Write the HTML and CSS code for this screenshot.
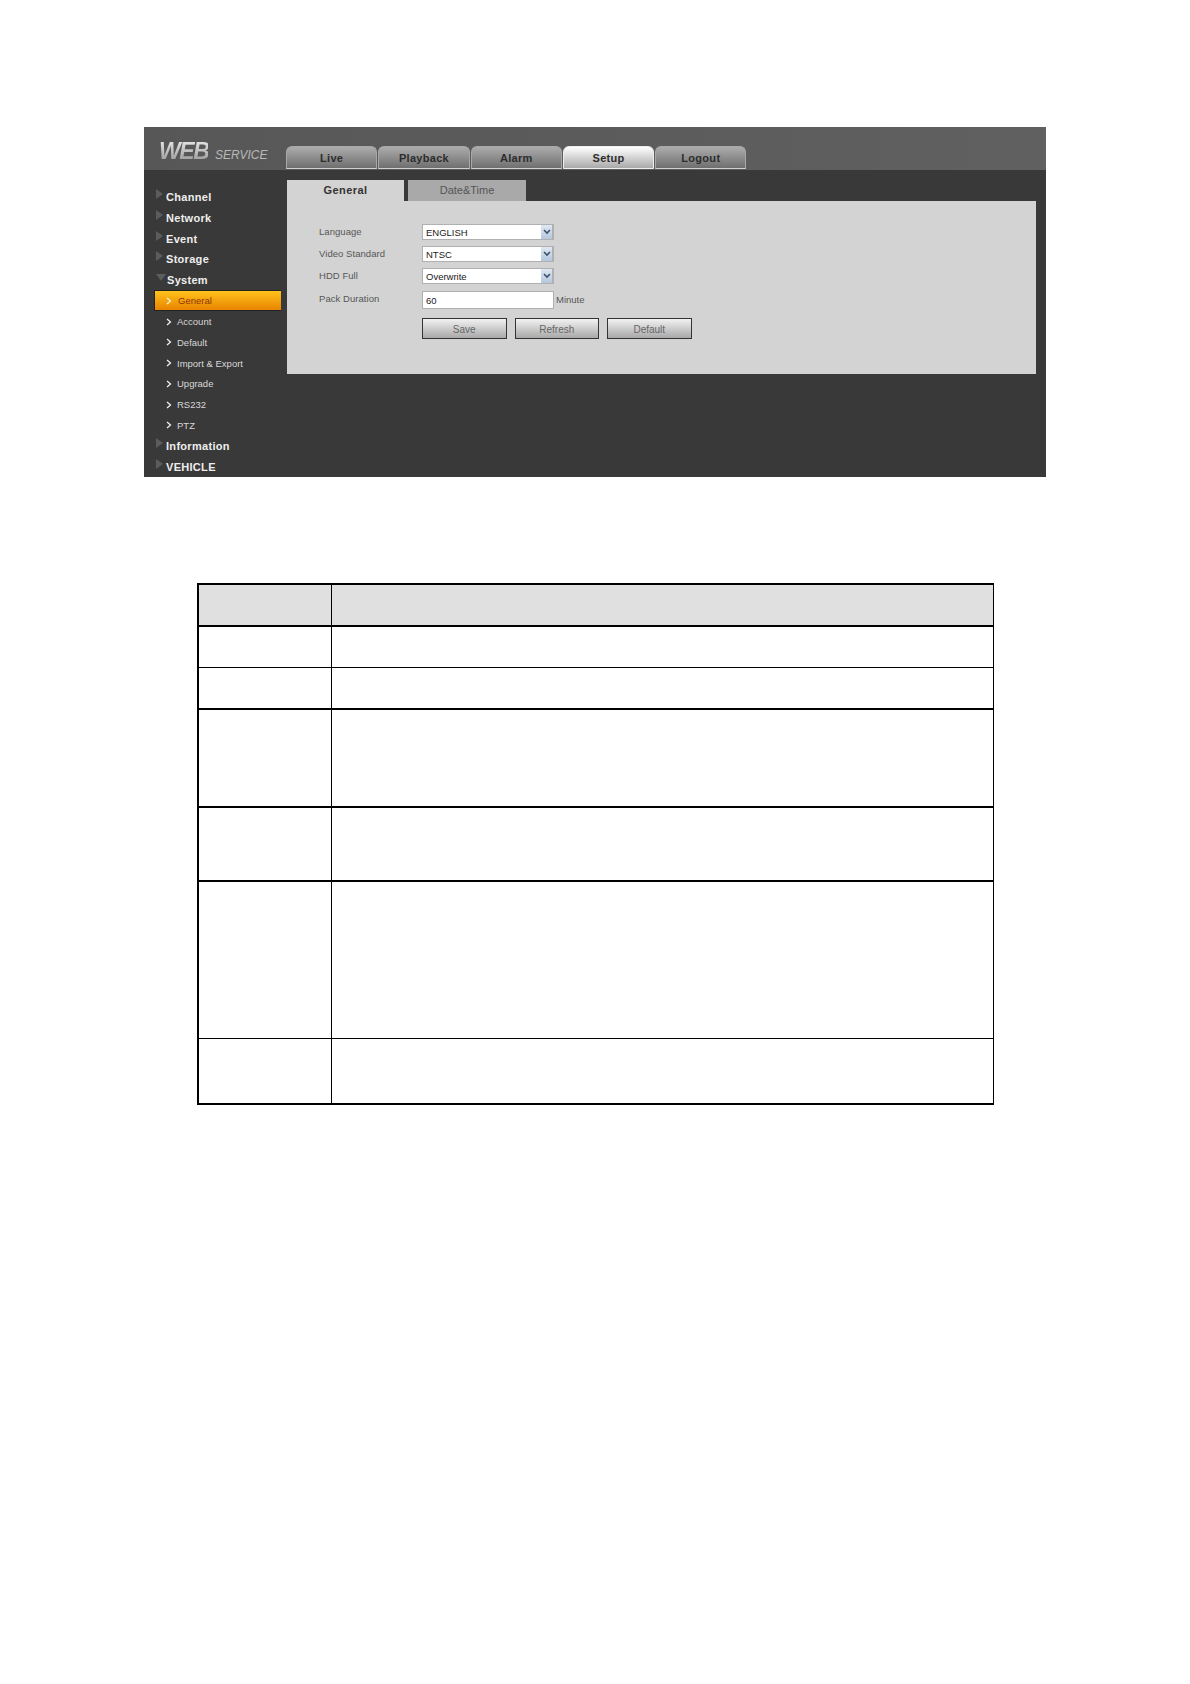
FILE: index.html
```html
<!DOCTYPE html>
<html lang="en">
<head>
    <meta charset="UTF-8">
    <title>WEB SERVICE - General</title>
    <link rel="stylesheet" href="styles.css">
</head>
<body>
    <div class="panel">
        <div class="header">
            <div class="logo"><span class="logo-web">WEB</span><span class="logo-service">SERVICE</span></div>
            <div class="nav-tabs">
                <a class="nav-tab">Live</a>
                <a class="nav-tab">Playback</a>
                <a class="nav-tab">Alarm</a>
                <a class="nav-tab active">Setup</a>
                <a class="nav-tab">Logout</a>
            </div>
        </div>
        <div class="content">
            <ul class="sidebar">
                <li class="menu"><i class="arrow"></i>Channel</li>
                <li class="menu"><i class="arrow"></i>Network</li>
                <li class="menu"><i class="arrow"></i>Event</li>
                <li class="menu"><i class="arrow"></i>Storage</li>
                <li class="menu"><i class="arrow open"></i>System</li>
                <li class="submenu selected"><svg class="chevron" viewBox="0 0 6 8"><path d="M1 1l3.5 3L1 7"/></svg>General</li>
                <li class="submenu"><svg class="chevron" viewBox="0 0 6 8"><path d="M1 1l3.5 3L1 7"/></svg>Account</li>
                <li class="submenu"><svg class="chevron" viewBox="0 0 6 8"><path d="M1 1l3.5 3L1 7"/></svg>Default</li>
                <li class="submenu"><svg class="chevron" viewBox="0 0 6 8"><path d="M1 1l3.5 3L1 7"/></svg>Import &amp; Export</li>
                <li class="submenu"><svg class="chevron" viewBox="0 0 6 8"><path d="M1 1l3.5 3L1 7"/></svg>Upgrade</li>
                <li class="submenu"><svg class="chevron" viewBox="0 0 6 8"><path d="M1 1l3.5 3L1 7"/></svg>RS232</li>
                <li class="submenu"><svg class="chevron" viewBox="0 0 6 8"><path d="M1 1l3.5 3L1 7"/></svg>PTZ</li>
                <li class="menu"><i class="arrow"></i>Information</li>
                <li class="menu"><i class="arrow"></i>VEHICLE</li>
            </ul>
            <div class="main">
                <div class="sub-tabs">
                    <div class="sub-tab active">General</div>
                    <div class="sub-tab">Date&amp;Time</div>
                </div>
                <div class="form">
                    <div class="form-row">
                        <label class="form-label">Language</label>
                        <div class="select">ENGLISH<span class="select-btn"><svg viewBox="0 0 8 6"><path d="M1 1l3 3 3-3"/></svg></span></div>
                    </div>
                    <div class="form-row">
                        <label class="form-label">Video Standard</label>
                        <div class="select">NTSC<span class="select-btn"><svg viewBox="0 0 8 6"><path d="M1 1l3 3 3-3"/></svg></span></div>
                    </div>
                    <div class="form-row">
                        <label class="form-label">HDD Full</label>
                        <div class="select">Overwrite<span class="select-btn"><svg viewBox="0 0 8 6"><path d="M1 1l3 3 3-3"/></svg></span></div>
                    </div>
                    <div class="form-row">
                        <label class="form-label">Pack Duration</label>
                        <input class="text-input" type="text" value="60">
                        <span class="unit">Minute</span>
                    </div>
                    <div class="form-buttons">
                        <button class="btn">Save</button>
                        <button class="btn">Refresh</button>
                        <button class="btn">Default</button>
                    </div>
                </div>
            </div>
        </div>
    </div>

    <table class="params">
        <tr class="row-head"><td></td><td></td></tr>
        <tr class="row-a thin"><td></td><td></td></tr>
        <tr class="row-b"><td></td><td></td></tr>
        <tr class="row-c"><td></td><td></td></tr>
        <tr class="row-d"><td></td><td></td></tr>
        <tr class="row-e thin"><td></td><td></td></tr>
        <tr class="row-f"><td></td><td></td></tr>
    </table>
</body>
</html>
```
FILE: styles.css
```css
body {
    margin: 0;
    padding-top: 127px;
    background: #fff;
    font-family: "Liberation Sans", Arial, sans-serif;
}

.panel {
    width: 902px;
    height: 350px;
    margin-left: 144px;
    display: flex;
    flex-direction: column;
    background: #393939;
}

/* top bar */
.header {
    height: 43px;
    display: flex;
    align-items: flex-end;
    background: linear-gradient(to right, #575757, #606060);
}
.logo {
    width: 142px;
    height: 32px;
    box-sizing: border-box;
    padding-left: 15px;
    display: flex;
    align-items: baseline;
    align-self: flex-start;
    margin-top: 11px;
}
.logo-web {
    font-size: 23px;
    font-weight: bold;
    font-style: italic;
    letter-spacing: -1.4px;
    background: linear-gradient(#eee, #8f8f8f);
    -webkit-background-clip: text;
    background-clip: text;
    color: transparent;
}
.logo-service {
    margin-left: 6.5px;
    font-size: 12px;
    font-style: italic;
    color: #b8b8b8;
}
.nav-tabs {
    display: flex;
    gap: 1px;
    margin-bottom: 1px;
}
.nav-tab {
    width: 91.3px;
    height: 23px;
    box-sizing: border-box;
    padding-top: 5px;
    text-align: center;
    font-size: 11px;
    font-weight: bold;
    letter-spacing: 0.3px;
    color: #2d2d2d;
    border: 1px solid #a8a8a8;
    border-bottom-color: #d0d0d0;
    border-radius: 6px 6px 0 0;
    background: linear-gradient(#acacac, #6f6f6f);
}
.nav-tab.active {
    border-color: #eee;
    background: linear-gradient(#fff, #a9a9a9);
}

.content {
    flex: 1;
    display: flex;
}

/* left menu */
.sidebar {
    width: 143px;
    flex: none;
    box-sizing: border-box;
    margin: 0;
    padding: 16.7px 0 0;
    list-style: none;
}
.menu, .submenu {
    height: 20.76px;
    display: flex;
    align-items: center;
}
.menu {
    padding-left: 12px;
    font-size: 11px;
    font-weight: bold;
    letter-spacing: 0.3px;
    color: #eee;
}
.arrow {
    width: 0;
    height: 0;
    margin: -6px 3px 0 0;
    border-left: 7px solid #5c5c5c;
    border-top: 5px solid transparent;
    border-bottom: 5px solid transparent;
}
.arrow.open {
    margin: -5px 1px 0 0;
    border-top: 7px solid #5c5c5c;
    border-left: 5px solid transparent;
    border-right: 5px solid transparent;
    border-bottom: 0;
}
.submenu {
    padding-left: 22px;
    font-size: 9.5px;
    color: #d8d8d8;
}
.chevron {
    width: 6px;
    height: 8px;
    margin-right: 5px;
    fill: none;
    stroke: #eee;
    stroke-width: 1.3;
}
.submenu.selected {
    box-sizing: border-box;
    width: 127px;
    margin-left: 10px;
    padding-left: 11px;
    color: #8f3508;
    border: 1px solid #222;
    border-width: 1px 0 1px 1px;
    background: linear-gradient(#ffc31c, #e88300);
}
.submenu.selected .chevron {
    stroke: #fff1c8;
    margin-right: 6px;
}

/* right side */
.main {
    width: 749px;
    padding-top: 10px;
}
.sub-tabs {
    display: flex;
    gap: 4px;
}
.sub-tab {
    width: 118px;
    height: 21px;
    line-height: 21px;
    text-align: center;
    font-size: 11px;
    color: #555;
    background: #a9a9a9;
}
.sub-tab.active {
    width: 117px;
    font-weight: bold;
    letter-spacing: 0.4px;
    color: #333;
    background: #d3d3d3;
}
.form {
    height: 173px;
    box-sizing: border-box;
    padding: 23px 0 0 32px;
    background: #d3d3d3;
}
.form-row {
    display: flex;
    align-items: center;
    margin-bottom: 6px;
}
.form-label {
    width: 103px;
    padding-bottom: 2px;
    font-size: 9.5px;
    letter-spacing: 0.05px;
    color: #565656;
}
.select {
    width: 132px;
    height: 16px;
    box-sizing: border-box;
    padding-left: 3px;
    display: flex;
    align-items: center;
    justify-content: space-between;
    font-size: 9.5px;
    color: #222;
    background: #fff;
    border: 1px solid #b0b0b0;
    border-right-width: 2px;
}
.select-btn {
    width: 11px;
    height: 14px;
    display: flex;
    align-items: center;
    justify-content: center;
    background: linear-gradient(#dfe8f2, #b5c7dd);
}
.select-btn svg {
    width: 8px;
    height: 6px;
    fill: none;
    stroke: #3d4f6b;
    stroke-width: 1.6;
}
.text-input {
    width: 132px;
    height: 18px;
    box-sizing: border-box;
    margin: 1px 0 0;
    padding: 0 3px;
    font-family: inherit;
    font-size: 9.5px;
    color: #222;
    background: #fff;
    border: 1px solid #b0b0b0;
}
.unit {
    margin-left: 2px;
    font-size: 9.5px;
    color: #565656;
}
.form-buttons {
    display: flex;
    gap: 8px;
    margin-top: 9px;
    margin-left: 103px;
}
.btn {
    width: 84.5px;
    height: 21px;
    padding: 2px 0 0;
    font-family: inherit;
    font-size: 10px;
    color: #666;
    border: 1px solid #333;
    border-radius: 0;
    background: linear-gradient(#f2f2f2, #a8a8a8);
}

/* parameter table, cells are empty */
.params {
    width: 797px;
    margin: 106px 0 0 197px;
    border-collapse: separate;
    border-spacing: 0;
    border-top: 2px solid #000;
    border-left: 2px solid #000;
    border-right: 1px solid #000;
}
.params td {
    box-sizing: border-box;
    padding: 0;
    border-bottom: 2px solid #000;
}
.params .thin td {
    border-bottom-width: 1px;
}
.params td:first-child {
    width: 133px;
    border-right: 1px solid #000;
}
.row-head td {
    height: 42px;
    background: #e0e0e0;
}
.row-a td { height: 41px; }
.row-b td { height: 42px; }
.row-c td { height: 98px; }
.row-d td { height: 74px; }
.row-e td { height: 157px; }
.row-f td { height: 66px; }
```
